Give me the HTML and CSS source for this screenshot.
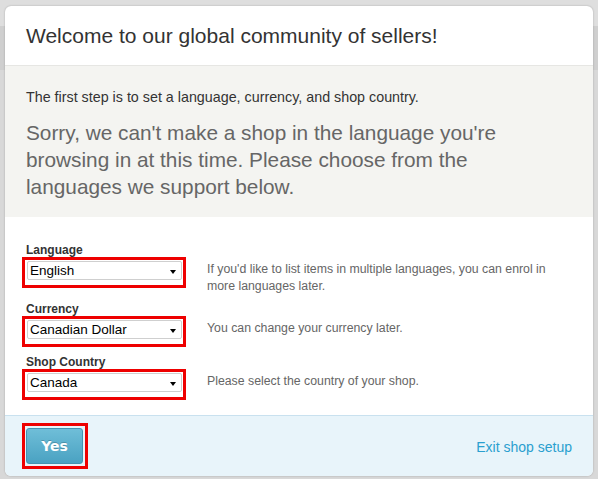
FILE: index.html
```html
<!DOCTYPE html>
<html>
<head>
<meta charset="utf-8">
<link rel="stylesheet" href="styles.css">
</head>
<body>
<div class="backdrop">
  <div class="modal">
    <div class="modal-header">
      <h1 class="title">Welcome to our global community of sellers!</h1>
    </div>
    <div class="intro">
      <p class="intro-lead">The first step is to set a language, currency, and shop country.</p>
      <p class="intro-sorry">Sorry, we can't make a shop in the language you're browsing in at this time. Please choose from the languages we support below.</p>
    </div>
    <div class="form">
      <div class="field">
        <div class="field-control">
          <div class="label">Language</div>
          <div class="highlight"><div class="select">English<span class="caret"></span></div></div>
        </div>
        <div class="help">If you'd like to list items in multiple languages, you can enrol in more languages later.</div>
      </div>
      <div class="field">
        <div class="field-control">
          <div class="label">Currency</div>
          <div class="highlight"><div class="select">Canadian Dollar<span class="caret"></span></div></div>
        </div>
        <div class="help">You can change your currency later.</div>
      </div>
      <div class="field field-last">
        <div class="field-control">
          <div class="label">Shop Country</div>
          <div class="highlight"><div class="select">Canada<span class="caret"></span></div></div>
        </div>
        <div class="help">Please select the country of your shop.</div>
      </div>
    </div>
    <div class="footer">
      <div class="btn-highlight"><button class="btn-yes">Yes</button></div>
      <a class="exit-link" href="#">Exit shop setup</a>
    </div>
  </div>
</div>
</body>
</html>
```
FILE: styles.css
```css
* { box-sizing: border-box; }
html, body { margin: 0; padding: 0; }
body {
  background: #d6d6d6;
  font-family: Arial, "Liberation Sans", sans-serif;
  width: 598px;
  height: 479px;
  overflow: hidden;
}
.backdrop {
  padding: 6px 5px 0 5px;
  height: 479px;
  background: linear-gradient(#dedede 0, #dedede 26px, #cfcfcf 26px, #cfcfcf 70px, #d8d8d8 70px);
}
.modal {
  width: 588px;
  height: 470px;
  background: #fff;
  border-radius: 6px;
  box-shadow: 0 0 2px rgba(0,0,0,0.25);
  overflow: hidden;
  display: flex;
  flex-direction: column;
}
.modal-header {
  height: 60px;
  flex: none;
  padding: 0 21px;
  display: flex;
  align-items: center;
  border-bottom: 1px solid #e6e6e3;
}
.title {
  margin: 0;
  font-size: 21px;
  font-weight: normal;
  color: #333;
}
.intro {
  background: #f4f4f1;
  padding: 23px 21px 0 21px;
  height: 151px;
  flex: none;
}
.intro-lead {
  margin: 0 0 13px 0;
  font-size: 14.3px;
  color: #333;
  line-height: 17px;
}
.intro-sorry {
  margin: 0;
  font-size: 20.8px;
  color: #666;
  line-height: 27px;
  max-width: 500px;
}
.form {
  flex: 1;
  padding: 26px 17px 0 17px;
  display: flex;
  flex-direction: column;
  gap: 7px;
}
.field {
  display: flex;
  gap: 21px;
}
.field-last { margin-top: 1px; }
.field-control {
  width: 164px;
  flex: none;
}
.label {
  font-size: 12px;
  font-weight: bold;
  color: #333;
  padding-left: 4px;
  height: 14px;
  line-height: 14px;
}
.highlight {
  border: 3px solid #ee0000;
  padding: 1px 1px 5px 2px;
  height: 31px;
}
.select {
  height: 19px;
  border: 1px solid #cfcfcf;
  border-radius: 2px;
  background: #fff;
  font-size: 13.5px;
  line-height: 17px;
  color: #000;
  padding-left: 2px;
  position: relative;
}
.caret {
  position: absolute;
  right: 5px;
  top: 8px;
  width: 0;
  height: 0;
  border-left: 3.5px solid transparent;
  border-right: 3.5px solid transparent;
  border-top: 4px solid #000;
}
.help {
  padding-top: 18px;
  font-size: 12.3px;
  line-height: 17px;
  color: #666;
  width: 360px;
}
.footer {
  height: 61px;
  flex: none;
  background: #e8f4fa;
  border-top: 1px solid #c9e1ef;
  display: flex;
  align-items: center;
  justify-content: space-between;
  padding: 0 21px 1px 17px;
}
.btn-highlight {
  border: 3px solid #ee0000;
  padding: 2px 2px 2px 1px;
  width: 66px;
  height: 46px;
}
.btn-yes {
  width: 57px;
  height: 36px;
  border: 1px solid #4393b0;
  border-radius: 3px;
  background: linear-gradient(#6fbed8, #4aa2c2);
  color: #fff;
  font-family: Verdana, "DejaVu Sans", sans-serif;
  font-weight: bold;
  font-size: 14px;
  text-shadow: 0 -1px 0 rgba(0,0,0,0.2);
  padding: 0;
  display: block;
}
.exit-link {
  font-size: 14px;
  color: #2a9fcf;
  text-decoration: none;
  margin-top: 2px;
}
```
